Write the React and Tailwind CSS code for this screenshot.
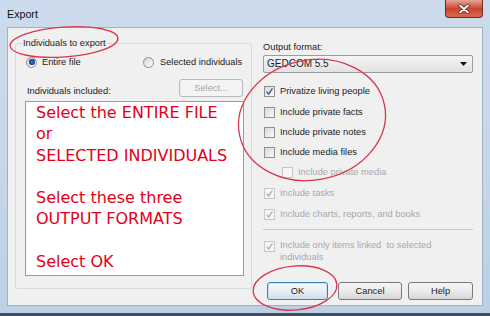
import React from 'react';

const ui = { fontFamily: '"Liberation Sans", Arial, sans-serif' };
const big = { fontFamily: '"DejaVu Sans", Verdana, sans-serif' };

function Check({ checked, disabled }) {
  return (
    <span
      className={
        disabled
          ? 'w-[11px] h-[11px] shrink-0 flex items-center justify-center border border-[#c6c6c6] bg-[#f6f6f6]'
          : 'w-[11px] h-[11px] shrink-0 flex items-center justify-center border border-[#8e8f8f] bg-linear-to-br from-[#d8d8d8] to-[#fafafa]'
      }
    >
      {checked && (
        <svg width="9" height="9" viewBox="0 0 9 9">
          <path
            d="M1.6 4.6 L3.6 7 L7.5 1.4"
            fill="none"
            stroke={disabled ? '#b3b3b3' : '#44599a'}
            strokeWidth="1.4"
          />
        </svg>
      )}
    </span>
  );
}

function Option({ label, checked, disabled, className = '' }) {
  return (
    <div className={`flex items-center gap-[5px] h-[20px] ${className}`}>
      <Check checked={checked} disabled={disabled} />
      <span className={disabled ? 'text-[#a9a9a9]' : 'text-[#1b1b1b]'}>{label}</span>
    </div>
  );
}

function Radio({ checked }) {
  return (
    <span className="w-[11px] h-[11px] shrink-0 rounded-full border border-[#8e8f8f] bg-linear-to-br from-[#d6d6d6] to-[#fbfbfb] flex items-center justify-center">
      {checked && <span className="w-[6px] h-[6px] rounded-full bg-[#2c6fd1] shadow-[inset_0_0_0_1.5px_#1d4f9c]" />}
    </span>
  );
}

function Button({ children, primary, className = '' }) {
  return (
    <div
      className={
        primary
          ? `h-[18px] flex items-center justify-center rounded-[3px] border border-[#3c7fb1] bg-linear-to-b from-[#f4f8fb] via-[#e9eef2] to-[#d3dbe1] shadow-[inset_0_0_0_1px_#c4e3f5] text-[#1b1b1b] ${className}`
          : `h-[18px] flex items-center justify-center rounded-[3px] border border-[#7a7a7a] bg-linear-to-b from-[#f6f6f6] via-[#ebebeb] to-[#d6d6d6] text-[#1b1b1b] ${className}`
      }
    >
      {children}
    </div>
  );
}

export default function App() {
  return (
    <div
      className="relative w-[490px] h-[316px] overflow-hidden flex flex-col bg-linear-to-b from-[#cddcec] via-[#c6d7e9] to-[#bccfe4] text-[9.3px] leading-[12px]"
      style={ui}
    >
      {/* title bar */}
      <div className="h-[27px] shrink-0 flex justify-between">
        <div className="pl-[7px] pt-[8px] text-[10.7px] text-[#111]">Export</div>
        <div className="mr-[7px] w-[38px] h-[18px] rounded-b-[4px] border border-t-0 border-[#6d2b22] bg-linear-to-b from-[#e4a398] via-[#c9442f] to-[#d86a50] flex items-center justify-center">
          <svg width="12" height="10" viewBox="0 0 12 10">
            <path d="M2 1.5 L10 8.5 M10 1.5 L2 8.5" stroke="#5a1a12" strokeWidth="3.2" strokeLinecap="round" />
            <path d="M2 1.5 L10 8.5 M10 1.5 L2 8.5" stroke="#fff" strokeWidth="1.8" strokeLinecap="round" />
          </svg>
        </div>
      </div>

      {/* client area */}
      <div className="mx-[7px] h-[279px] shrink-0 border border-[#9fb3c8] bg-[#f0f0f0] flex">
        <div className="pl-[7px]">
          <div className="mt-[15px] w-[237px] h-[246px] border border-[#d2dbe2] rounded-[3px] flex flex-col">
            <div className="-mt-[7px] ml-[6px] self-start px-px bg-[#f0f0f0] text-[#1b1b1b]">Individuals to export</div>
            <div className="mt-[7px] h-[12px] flex items-center pl-[10px] text-[#1b1b1b]">
              <div className="w-[117px] flex items-center gap-[5px]">
                <Radio checked />
                <span>Entire file</span>
              </div>
              <div className="flex items-center gap-[6px]">
                <Radio />
                <span>Selected individuals</span>
              </div>
            </div>
            <div className="mt-[11px] h-[18px] flex items-end justify-between pl-[11px] pr-[8px]">
              <span className="text-[#1b1b1b]">Individuals included:</span>
              <div className="w-[64px] h-[18px] flex items-center justify-center rounded-[3px] border border-[#b5b9bc] bg-[#f4f4f4] text-[#a6a6a6]">
                Select...
              </div>
            </div>
            <div
              className="mt-[4px] ml-[9px] w-[219px] h-[175px] border border-[#9b9b9b] bg-white pl-[10px] text-[16px] leading-[21.3px] text-[#e2001a]"
              style={big}
            >
              <div>Select the ENTIRE FILE</div>
              <div>or</div>
              <div>SELECTED INDIVIDUALS</div>
              <div className="h-[21.3px]" />
              <div>Select these three</div>
              <div>OUTPUT FORMATS</div>
              <div className="h-[21.3px]" />
              <div>Select OK</div>
            </div>
          </div>
        </div>

        <div className="pl-[11px] pt-[13px] flex flex-col">
          <div className="text-[#1b1b1b]">Output format:</div>
          <div className="mt-[2px] w-[210px] h-[18px] rounded-[2px] border border-[#9c9c9c] bg-linear-to-b from-[#f5f5f5] to-[#e2e2e2] flex items-center justify-between pl-[3px] pr-[5px] text-[10px] text-[#1b1b1b]">
            <span>GEDCOM 5.5</span>
            <svg width="7" height="4" viewBox="0 0 7 4">
              <path d="M0 0 H7 L3.5 4 Z" fill="#111" />
            </svg>
          </div>
          <div className="mt-[8px] flex flex-col pl-px">
            <Option label="Privatize living people" checked />
            <Option label="Include private facts" className="mt-px" />
            <Option label="Include private notes" />
            <Option label="Include media files" />
            <Option label="Include private media" disabled className="pl-[18px]" />
            <Option label="Include tasks" checked disabled className="mt-px" />
            <Option label="Include charts, reports, and books" checked disabled className="mt-px" />
          </div>
          <div className="mt-[5px] w-[210px] h-px bg-[#c9c9c9]" />
          <div className="mt-[10px] pl-px flex items-start gap-[5px] leading-[11.5px] text-[#a9a9a9]">
            <span className="mt-px">
              <Check checked disabled />
            </span>
            <span>
              Include only items linked&nbsp; to selected
              <br />
              individuals
            </span>
          </div>
          <div className="mt-[19px] ml-[4px] flex">
            <Button primary className="w-[61px]">OK</Button>
            <Button className="ml-[10px] w-[64px]">Cancel</Button>
            <Button className="ml-[6px] w-[65px]">Help</Button>
          </div>
        </div>
      </div>

      <div className="flex-1 border-b-[3px] border-[#3f4e5e]" />

      {/* hand-drawn annotation circles */}
      <svg className="absolute inset-0 pointer-events-none" width="490" height="316" viewBox="0 0 490 316">
        <g fill="none" stroke="#d8374a" strokeWidth="1.3">
          <ellipse cx="64" cy="42" rx="54" ry="15" transform="rotate(-4 64 42)" />
          <ellipse cx="312" cy="120" rx="74" ry="60" transform="rotate(-12 312 120)" />
          <ellipse cx="295" cy="288" rx="42" ry="22" transform="rotate(-5 295 288)" />
        </g>
      </svg>
    </div>
  );
}
